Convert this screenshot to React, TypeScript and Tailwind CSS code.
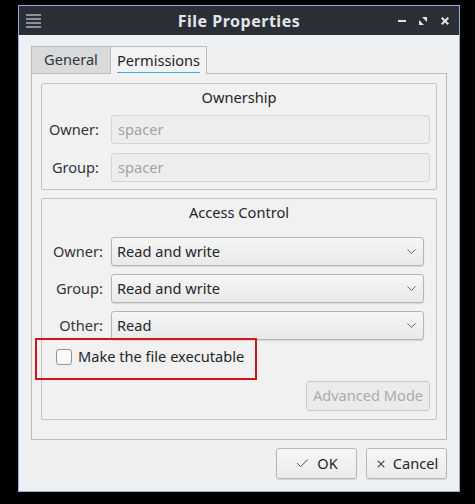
import { Check, ChevronDown, X } from 'lucide-react';

const font = { fontFamily: '"Noto Sans", "DejaVu Sans", sans-serif' };

function FieldRow({ label, value }: { label: string; value: string }) {
  return (
    <div className="flex items-center">
      <span className="w-[51px] text-right text-[#31363b]">{label}</span>
      <div className="ml-[12px] flex-1 h-[29px] rounded-[3px] border border-[#d4d4d4] bg-[#ededed] px-[6px] flex items-center text-[#a3a3a3]">
        {value}
      </div>
    </div>
  );
}

function ComboRow({ label, value }: { label: string; value: string }) {
  return (
    <div className="flex items-center">
      <span className="w-[55px] text-right text-[#31363b]">{label}</span>
      <div className="ml-[8px] w-[313px] h-[29px] rounded-[3px] border border-[#b6b6b6] bg-gradient-to-b from-[#f6f6f6] to-[#e9e9e9] shadow-[0_1px_1px_rgba(0,0,0,0.12)] pl-[5px] pr-[4px] flex items-center justify-between text-[#232629]">
        <span>{value}</span>
        <ChevronDown size={15} strokeWidth={1.4} className="text-[#4a4f55]" />
      </div>
    </div>
  );
}

export default function App() {
  return (
    <div className="w-[475px] h-[504px] bg-black pt-[5px] pl-[18px] text-[14.6px]" style={font}>
      <div className="w-[442px] h-[487px] border border-[#8eaedb] bg-[#eff0f1] flex flex-col">
        {/* title bar */}
        <div className="h-[29px] bg-[#2a2e36] flex items-center pl-[7px] pr-[10px] relative">
          <div className="flex flex-col gap-[2px] w-[15px]">
            <span className="h-[2px] bg-[#8b909a]" />
            <span className="h-[2px] bg-[#8b909a]" />
            <span className="h-[2px] bg-[#8b909a]" />
            <span className="h-[2px] bg-[#8b909a]" />
          </div>
          <div className="flex-1 text-center font-bold text-[16px] text-[#e3e5e8] tracking-[0.5px] pl-[39px]">File Properties</div>
          <div className="flex items-center">
            <span className="w-[8px] h-[2px] bg-[#e3e5e8]" />
            <svg width="8" height="8" viewBox="0 0 8 8" className="ml-[13px]">
              <path d="M0 8 L0 3 L5 8 Z" fill="#e3e5e8" />
              <path d="M8 0 L8 5 L3 0 Z" fill="#e3e5e8" />
            </svg>
            <svg width="8" height="8" viewBox="0 0 8 8" className="ml-[14px]">
              <path d="M0.7 0.7 L7.3 7.3 M7.3 0.7 L0.7 7.3" stroke="#e3e5e8" strokeWidth="2" />
            </svg>
          </div>
        </div>

        {/* body */}
        <div className="flex-1 flex flex-col pt-[11px] pl-[12px] pr-[12px]">
          {/* tabs */}
          <div className="flex items-end h-[27px]">
            <div className="w-[80px] h-[27px] border border-b-0 border-[#bcbcbc] bg-[#d9dadb] flex items-center justify-center text-[#31363b]">
              General
            </div>
            <div className="w-[96px] h-[28px] -mb-[1px] border border-b-0 border-l-0 border-[#bcbcbc] bg-[#f3f3f3] flex items-center justify-center text-[#232629] relative z-10">
              <span className="relative">
                Permissions
                <span className="absolute left-0 right-0 -bottom-[2px] h-[1px] bg-[#3daee9]" />
              </span>
            </div>
          </div>

          {/* panel */}
          <div className="relative h-[367px] border border-[#bcbcbc] bg-[#f1f1f1] p-[9px] flex flex-col gap-[8px]">
            <div className="h-[107px] border border-[#c3c3c3] rounded-[2px] flex flex-col pt-[3px] px-[6px]">
              <div className="text-center text-[#232629] h-[20px] leading-[20px]">Ownership</div>
              <div className="mt-[8px] flex flex-col gap-[9px]">
                <FieldRow label="Owner:" value="spacer" />
                <FieldRow label="Group:" value="spacer" />
              </div>
            </div>

            <div className="h-[222px] border border-[#c3c3c3] rounded-[2px] flex flex-col pt-[3px] px-[6px]">
              <div className="text-center text-[#232629] h-[20px] leading-[20px]">Access Control</div>
              <div className="mt-[15px] flex flex-col gap-[8px]">
                <ComboRow label="Owner:" value="Read and write" />
                <ComboRow label="Group:" value="Read and write" />
                <ComboRow label="Other:" value="Read" />
              </div>
              <div className="mt-[8px] flex items-center pl-[8px] h-[18px]">
                <span className="w-[16px] h-[16px] rounded-[3px] border border-[#8f9396] bg-[#f8f8f8]" />
                <span className="ml-[6px] text-[#232629]">Make the file executable</span>
              </div>
              <div className="mt-[15px] flex justify-end">
                <div className="w-[124px] h-[30px] rounded-[3px] border border-[#cacaca] bg-[#ebebeb] flex items-center justify-center text-[#a9abad]">
                  Advanced Mode
                </div>
              </div>
            </div>

            {/* annotation */}
            <div className="absolute left-[3px] top-[264px] w-[222px] h-[42px] border-2 border-[#d0141c] pointer-events-none" />
          </div>

          {/* buttons */}
          <div className="mt-[8px] flex justify-end gap-[9px]">
            <div className="w-[81px] h-[31px] rounded-[3px] border border-[#b8b8b8] bg-gradient-to-b from-[#f7f7f7] to-[#eaeaea] shadow-[0_1px_1px_rgba(0,0,0,0.12)] flex items-center justify-center gap-[7px] text-[#232629]">
              <Check size={15} strokeWidth={1.6} className="text-[#4d5257]" />
              <span>OK</span>
            </div>
            <div className="w-[81px] h-[31px] rounded-[3px] border border-[#b8b8b8] bg-gradient-to-b from-[#f7f7f7] to-[#eaeaea] shadow-[0_1px_1px_rgba(0,0,0,0.12)] flex items-center justify-center gap-[6px] text-[#232629]">
              <X size={12} strokeWidth={2.2} className="text-[#4d5257]" />
              <span>Cancel</span>
            </div>
          </div>
        </div>
      </div>
    </div>
  );
}
